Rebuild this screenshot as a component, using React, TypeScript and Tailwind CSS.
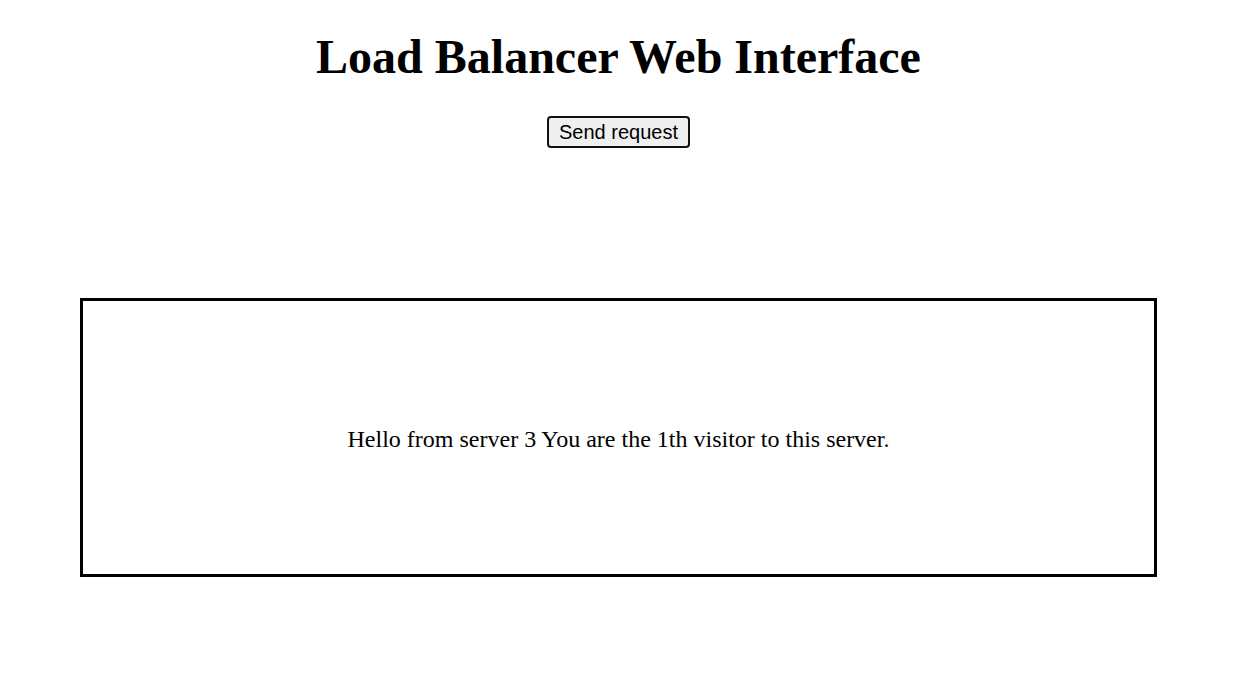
export default function App() {
  return (
    <div className="flex min-h-[698px] flex-col items-center bg-white pl-[2px] text-black">
      <h1 className="mt-[30px] text-[48px] font-bold leading-[53px] font-['Liberation_Serif',serif]">
        Load Balancer Web Interface
      </h1>
      <button className="mt-[33px] flex h-[32px] w-[143px] items-center justify-center rounded-[4px] border-2 border-[#111] bg-[#efefef] text-[20px] leading-none font-['Liberation_Sans',Arial,sans-serif]">
        Send request
      </button>
      <div className="mt-[150px] flex h-[279px] w-[1077px] items-center justify-center border-[3px] border-black">
        <p className="pt-[2px] text-[24px] leading-[28px] font-['Liberation_Serif',serif]">
          Hello from server 3 You are the 1th visitor to this server.
        </p>
      </div>
    </div>
  );
}
